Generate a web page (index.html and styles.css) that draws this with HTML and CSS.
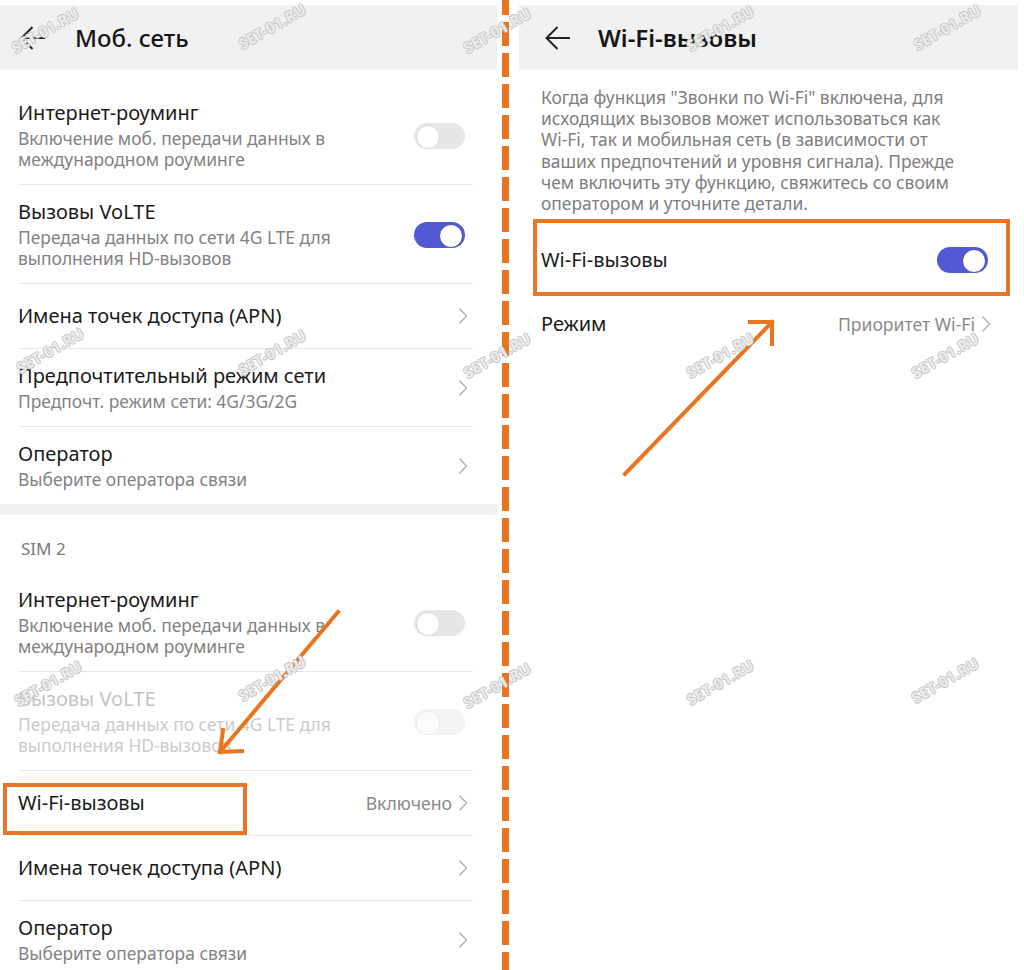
FILE: index.html
```html
<!DOCTYPE html>
<html lang="ru">
<head>
  <meta charset="UTF-8">
  <title>Wi-Fi-вызовы</title>
  <link rel="stylesheet" href="styles.css">
</head>
<body>

<div class="page">

  <!-- левый экран -->
  <section class="panel panel-left">
    <header class="topbar">
      <svg class="back" viewBox="0 0 26 24"><path d="M25 12H1.5M12.5 1L1.5 12l11 11"/></svg>
      <h1>Моб. сеть</h1>
    </header>

    <div class="list">
      <div class="item item-first">
        <div class="text">
          <div class="title">Интернет-роуминг</div>
          <div class="sub">Включение моб. передачи данных в международном роуминге</div>
        </div>
        <span class="switch"></span>
      </div>
      <div class="item">
        <div class="text">
          <div class="title">Вызовы VoLTE</div>
          <div class="sub">Передача данных по сети 4G LTE для выполнения HD-вызовов</div>
        </div>
        <span class="switch on"></span>
      </div>
      <div class="item single">
        <div class="text"><div class="title">Имена точек доступа (APN)</div></div>
        <svg class="chev" viewBox="0 0 10 18"><path d="M1.5 1.5L8.5 9l-7 7.5"/></svg>
      </div>
      <div class="item">
        <div class="text">
          <div class="title">Предпочтительный режим сети</div>
          <div class="sub">Предпочт. режим сети: 4G/3G/2G</div>
        </div>
        <svg class="chev" viewBox="0 0 10 18"><path d="M1.5 1.5L8.5 9l-7 7.5"/></svg>
      </div>
      <div class="item last">
        <div class="text">
          <div class="title">Оператор</div>
          <div class="sub">Выберите оператора связи</div>
        </div>
        <svg class="chev" viewBox="0 0 10 18"><path d="M1.5 1.5L8.5 9l-7 7.5"/></svg>
      </div>
    </div>

    <div class="band"></div>
    <div class="group-label">SIM 2</div>

    <div class="list">
      <div class="item">
        <div class="text">
          <div class="title">Интернет-роуминг</div>
          <div class="sub">Включение моб. передачи данных в международном роуминге</div>
        </div>
        <span class="switch"></span>
      </div>
      <div class="item disabled">
        <div class="text">
          <div class="title">Вызовы VoLTE</div>
          <div class="sub">Передача данных по сети 4G LTE для выполнения HD-вызовов</div>
        </div>
        <span class="switch"></span>
      </div>
      <div class="item single">
        <div class="text"><div class="title">Wi-Fi-вызовы</div></div>
        <span class="value">Включено</span>
        <svg class="chev" viewBox="0 0 10 18"><path d="M1.5 1.5L8.5 9l-7 7.5"/></svg>
        <span class="mark mark-left"></span>
      </div>
      <div class="item single">
        <div class="text"><div class="title">Имена точек доступа (APN)</div></div>
        <svg class="chev" viewBox="0 0 10 18"><path d="M1.5 1.5L8.5 9l-7 7.5"/></svg>
      </div>
      <div class="item last">
        <div class="text">
          <div class="title">Оператор</div>
          <div class="sub">Выберите оператора связи</div>
        </div>
        <svg class="chev" viewBox="0 0 10 18"><path d="M1.5 1.5L8.5 9l-7 7.5"/></svg>
      </div>
    </div>
  </section>

  <div class="split"><span class="dash"></span></div>

  <!-- правый экран -->
  <section class="panel panel-right">
    <header class="topbar">
      <svg class="back" viewBox="0 0 26 24"><path d="M25 12H1.5M12.5 1L1.5 12l11 11"/></svg>
      <h1>Wi-Fi-вызовы</h1>
    </header>

    <p class="note">Когда функция "Звонки по Wi-Fi" включена, для исходящих вызовов может использоваться как Wi-Fi, так и мобильная сеть (в зависимости от ваших предпочтений и уровня сигнала). Прежде чем включить эту функцию, свяжитесь со своим оператором и уточните детали.</p>

    <div class="list">
      <div class="item single plain">
        <div class="text"><div class="title">Wi-Fi-вызовы</div></div>
        <span class="switch on"></span>
        <span class="mark mark-right"></span>
      </div>
      <div class="item single plain">
        <div class="text"><div class="title">Режим</div></div>
        <span class="value">Приоритет Wi-Fi</span>
        <svg class="chev" viewBox="0 0 10 18"><path d="M1.5 1.5L8.5 9l-7 7.5"/></svg>
      </div>
    </div>
  </section>

  <!-- стрелки-подсказки -->
  <svg class="arrows" viewBox="0 0 1024 970">
    <path d="M338 612L220 752M220 752l3-22M220 752l22-1"/>
    <path d="M625 474L772 322M772 322l-22 0M772 322l0 22"/>
  </svg>

  <span class="wm" style="left:45px;top:30px">SET-01.RU</span>
  <span class="wm" style="left:272px;top:26px">SET-01.RU</span>
  <span class="wm" style="left:497px;top:30px">SET-01.RU</span>
  <span class="wm" style="left:720px;top:28px">SET-01.RU</span>
  <span class="wm" style="left:947px;top:27px">SET-01.RU</span>
  <span class="wm" style="left:50px;top:350px">SET-01.RU</span>
  <span class="wm" style="left:272px;top:352px">SET-01.RU</span>
  <span class="wm" style="left:497px;top:355px">SET-01.RU</span>
  <span class="wm" style="left:720px;top:355px">SET-01.RU</span>
  <span class="wm" style="left:945px;top:355px">SET-01.RU</span>
  <span class="wm" style="left:48px;top:683px">SET-01.RU</span>
  <span class="wm" style="left:272px;top:678px">SET-01.RU</span>
  <span class="wm" style="left:497px;top:685px">SET-01.RU</span>
  <span class="wm" style="left:720px;top:682px">SET-01.RU</span>
  <span class="wm" style="left:945px;top:680px">SET-01.RU</span>
</div>

</body>
</html>
```

FILE: styles.css
```css
* {
  box-sizing: border-box;
  font-family: 'Noto Sans', Roboto, sans-serif;
}

body {
  margin: 0;
  background: #ffffff;
  color: #1b1b1b;
}

.page {
  position: relative;
  display: flex;
  width: 1024px;
  height: 970px;
  overflow: hidden;
}

.panel-left {
  width: 497px;
}

.panel-right {
  width: 499px;
}

.topbar {
  display: flex;
  align-items: center;
  height: 65px;
  margin-top: 5px;
  background: #f1f1f1;
}

.panel-left .topbar {
  padding-left: 20px;
}

.panel-right .topbar {
  padding-left: 26px;
}

.back {
  width: 26px;
  height: 24px;
  fill: none;
  stroke: #222;
  stroke-width: 2;
}

.topbar h1 {
  margin: 0;
  font-size: 24px;
  font-weight: 500;
  color: #151515;
}

.panel-left .topbar h1 {
  margin-left: 29px;
}

.panel-right .topbar h1 {
  margin-left: 27px;
  font-weight: 600;
}

/* список */

.panel-left .list {
  margin: 0 24px 0 18px;
}

.panel-right .list {
  margin: 0 27px 0 22px;
}

.item {
  position: relative;
  display: flex;
  align-items: center;
  padding: 15px 0 14px;
  border-bottom: 1px solid #e9e9e9;
}

.item-first {
  padding-top: 31px;
}

.item.single {
  min-height: 65px;
  padding: 0;
}

.item.last,
.item.plain {
  border-bottom: none;
}

.item.plain {
  min-height: 64px;
}

.text {
  flex: 1;
}

.title {
  font-size: 20px;
  line-height: 24px;
  color: #1b1b1b;
}

.sub {
  margin-top: 3px;
  max-width: 380px;
  font-size: 17.4px;
  line-height: 21px;
  color: #828282;
}

.disabled .title {
  color: #c4c4c4;
}

.disabled .sub {
  color: #cbcbcb;
}

.value {
  margin-right: 6px;
  font-size: 17.6px;
  color: #8a8a8a;
}

.chev {
  width: 10px;
  height: 18px;
  margin-right: 5px;
  fill: none;
  stroke: #b4b4b4;
  stroke-width: 1.5;
}

.panel-right .chev {
  margin-right: 0;
}

.switch {
  position: relative;
  width: 51px;
  height: 26px;
  margin-right: 8px;
  border-radius: 13px;
  background: #e6e6e6;
}

.switch::after {
  content: "";
  position: absolute;
  top: 2px;
  left: 2px;
  width: 22px;
  height: 22px;
  border-radius: 50%;
  background: #fff;
  border: 1px solid #dadada;
}

.switch.on {
  background: #5159d4;
}

.switch.on::after {
  left: auto;
  right: 2px;
  border-color: #464c9c;
}

.disabled .switch {
  background: #f3f3f3;
}

.disabled .switch::after {
  background: #fbfbfb;
  border-color: #efefef;
}

.panel-right .switch {
  margin-right: 3px;
}

.band {
  height: 11px;
  background: #f1f1f1;
}

.group-label {
  padding: 24px 0 14px 21px;
  font-size: 17px;
  line-height: 20px;
  color: #7a7a7a;
}

/* правая часть */

.note {
  width: 449px;
  margin: 0;
  padding: 17px 0 14px 22px;
  font-size: 17.4px;
  line-height: 21.2px;
  color: #7e7e7e;
}

/* разделитель и пометки */

.split {
  width: 22px;
}

.dash {
  display: block;
  width: 7px;
  height: 100%;
  margin-left: 5px;
  background: repeating-linear-gradient(to bottom, #ea7520 0 15px, transparent 15px 22px, #ea7520 22px 31px);
}

.mark {
  position: absolute;
  border: 4px solid #e8762a;
}

.mark-left {
  top: 12px;
  left: -15px;
  width: 244px;
  height: 52px;
}

.mark-right {
  top: -9px;
  left: -8px;
  width: 477px;
  height: 77px;
}

.arrows {
  position: absolute;
  left: 0;
  top: 0;
  width: 1024px;
  height: 970px;
  fill: none;
  stroke: #ea7520;
  stroke-width: 4;
  stroke-linecap: square;
}

.wm {
  position: absolute;
  font-size: 15px;
  font-weight: 700;
  letter-spacing: 0.3px;
  color: #ededed;
  text-shadow: 1px 0 0 #c4c4c4, -1px 0 0 #c4c4c4, 0 1px 0 #c4c4c4, 0 -1px 0 #c4c4c4;
  white-space: nowrap;
  transform: translate(-50%, -50%) rotate(-30deg);
}
```
